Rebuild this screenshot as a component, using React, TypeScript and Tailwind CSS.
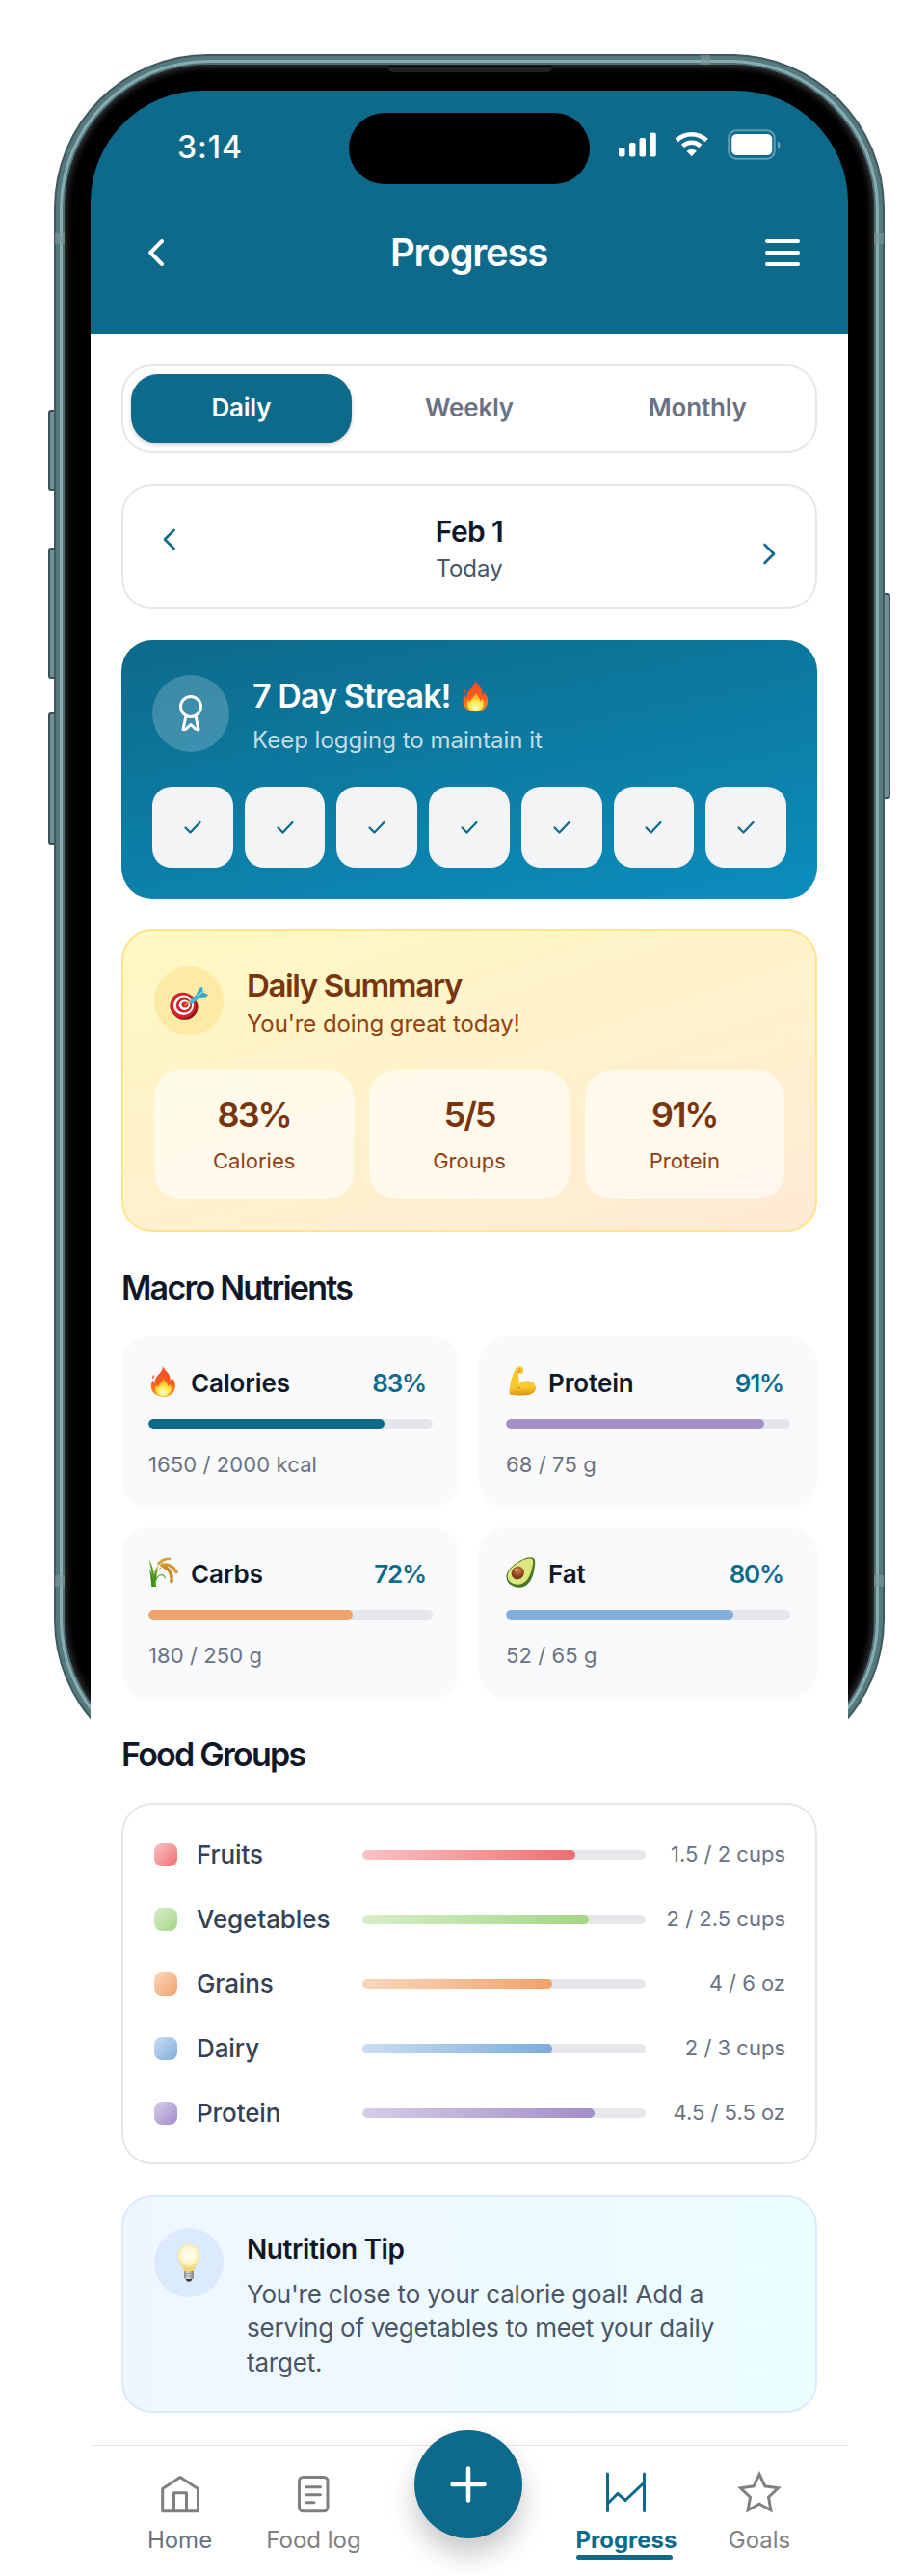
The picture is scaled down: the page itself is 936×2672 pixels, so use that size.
import type { ReactNode } from 'react'
import { clsx } from 'clsx'

interface Macro {
  name: string
  icon: ReactNode
  percent: number
  detail: string
  bar: string
}

interface FoodGroup {
  name: string
  amount: string
  percent: number
  gradient: string
}

function FireEmoji({ className }: { className?: string }) {
  return (
    <svg viewBox="0 0 28 34" className={className} fill="none">
      <defs>
        <linearGradient id="fireOuter" x1="14" y1="0" x2="14" y2="34" gradientUnits="userSpaceOnUse">
          <stop stopColor="#f0502a" />
          <stop offset=".55" stopColor="#fb5a1d" />
          <stop offset="1" stopColor="#fd9a20" />
        </linearGradient>
        <radialGradient id="fireInner" cx="14" cy="29" r="13" gradientUnits="userSpaceOnUse">
          <stop stopColor="#fffdc8" />
          <stop offset=".5" stopColor="#ffe84a" />
          <stop offset="1" stopColor="#fea61f" />
        </radialGradient>
      </defs>
      <path
        d="M13.5 0c1 4 6 6.500 7.500 11 .7 2 .5 3.500.3 5 1.200-.7 1.900-2 2.200-3.500 3 4 4.500 8 3.300 12.500C25.500 30.500 20.500 33.800 14 33.800 7 33.800 1.500 30 .7 24 .2 20.500 1 18 2.500 15.500c.3 1.500.8 2.500 1.700 3.500C4.500 14.500 6 12 9 9c2.500-2.500 4.300-5 4.500-9Z"
        fill="url(#fireOuter)"
      />
      <path d="M3.500 9.500c-1.500 1.500-2 3-1.200 4.500 1.500-1 2-2.500 1.200-4.500Z" fill="#f4512a" />
      <path
        d="M14.500 13c.2 3.500 4.500 5.500 4.800 9.500 1-.6 1.600-1.500 2-2.700 1.800 3 2.200 6 .7 8.700-1.600 3-4.500 4.600-8 4.600-4 0-7.500-1.800-8.500-5.100-.8-2.600-.3-4.800.8-7 .4 1.200 1 2 2 2.600.2-4 5.200-6.600 6.200-10.600Z"
        fill="url(#fireInner)"
      />
    </svg>
  )
}

function TargetEmoji({ className }: { className?: string }) {
  return (
    <svg viewBox="0 0 40 34" className={className} fill="none">
      <ellipse cx="15.500" cy="20.500" rx="14" ry="13.300" fill="#8e1218" />
      <ellipse cx="13.800" cy="19" rx="13.600" ry="13.200" fill="#d5202c" />
      <ellipse cx="14.500" cy="18.700" rx="10.600" ry="10.200" fill="#fff" />
      <ellipse cx="15" cy="18.500" rx="8.300" ry="8" fill="#cf1f2b" />
      <ellipse cx="15.500" cy="18.300" rx="5.900" ry="5.700" fill="#fff" />
      <ellipse cx="16" cy="18" rx="3.500" ry="3.400" fill="#cf1f2b" />
      <path d="m16 18 5-4.500" stroke="#c7a431" strokeWidth="1.600" strokeLinecap="round" />
      <path d="m20.500 14 9.500-8 3 2.500-8.500 7.500c-1.500 1-4.500 0-4-2Z" fill="#43b7d2" />
      <path d="m28 7 3-6 3-1 .7 5.500L40 8l-2 2.500-7 .5-3-4Z" fill="#3aa5c2" />
      <path d="m29 9 7.500-5.500" stroke="#8edbea" strokeWidth="1.300" />
    </svg>
  )
}

function ArmEmoji({ className }: { className?: string }) {
  return (
    <svg viewBox="0 0 30 32" className={className} fill="none">
      <defs>
        <linearGradient id="arm" x1="15" y1="0" x2="17" y2="32" gradientUnits="userSpaceOnUse">
          <stop stopColor="#fcc62f" />
          <stop offset=".7" stopColor="#fdc72e" />
          <stop offset="1" stopColor="#d98f13" />
        </linearGradient>
      </defs>
      <path
        d="M8 2.500C9 .5 12.500-.3 14.500 1c1.800 1.200 2.200 3.500 1.500 5.500-.4 1.200-1.700 1.600-3 1.300l-2-.3c-.3 3.500.2 7.500.9 12 1.500-2.300 4.300-3.700 8-3.700 5.600 0 9.600 3.300 9.600 7.500 0 5.700-5.600 8.200-14 8.200-5.500 0-10-.2-12.700-.8C1.300 30.300.8 29 1 27 1.700 19 4 9.500 8 2.500Z"
        fill="url(#arm)"
      />
      <path d="M8.500 21.500c.7 1.600 2.300 2.300 4.200 1.900M9.500 5.800l3.500.7M12.500 2.800l.3 2.200" stroke="#b97a15" strokeWidth=".8" strokeLinecap="round" />
    </svg>
  )
}

function RiceEmoji({ className }: { className?: string }) {
  return (
    <svg viewBox="0 0 31 32" className={className} fill="none" strokeLinecap="round">
      <path d="M4.500 31C4 22 3 12 .7 2.500 5 10 6.500 18 6.700 26" fill="#5aa32a" />
      <path d="M3.300 31C2.800 25 2 18 1 12.500c3 5 4.500 12 5 18.500Z" fill="#3f8a1f" />
      <path d="M5 31c0-9 1.500-17 4.500-21-1 6-1.500 14-1.500 21Z" fill="#478f22" />
      <path d="M7 29c.5-6 3-10.500 7-10.500 1.500 0 2.500 1.500 3.500 3.500" stroke="#75b63c" strokeWidth="1.300" />
      <path d="M6.500 17C8 10 12 5.500 18 3.500M7.500 17c3.500-6 8-8 13-7.500" stroke="#a9a23c" strokeWidth=".9" />
      <path d="M10.500 6.500C14 3 18 1.800 22 1.800" stroke="#d99f3a" strokeWidth="2.800" strokeDasharray="1.500 2.500" />
      <path d="M14 8.500c6-1.500 11 .5 15 7" stroke="#d79932" strokeWidth="3.600" strokeDasharray="1.800 2.200" />
      <path d="M17 10.500c5 2.500 7.500 7 7 15.500" stroke="#c98727" strokeWidth="3.600" strokeDasharray="1.800 2.200" />
    </svg>
  )
}

function AvocadoEmoji({ className }: { className?: string }) {
  return (
    <svg viewBox="0 0 31 32" className={className} fill="none">
      <defs>
        <radialGradient id="pit" cx="11" cy="14" r="8" gradientUnits="userSpaceOnUse">
          <stop stopColor="#d0824f" />
          <stop offset="1" stopColor="#7b3813" />
        </radialGradient>
      </defs>
      <path
        d="M21.500.8c2.500-.9 6-.7 7.700.7 2 2.500.7 9.500-.7 15.500C26.500 25 22 31.700 14 31.700 6 31.700.5 27 .5 20.500.5 12.500 12 4 21.500.8Z"
        fill="#4c7527"
      />
      <path
        d="M21 2c2.500-.9 5.300-.8 6.500.3 1.500 2 .3 7.700-1.300 12.700C24 22.500 19.500 28.700 12.700 28.700 6 28.700 1.700 25 1.700 19.700 1.700 12.500 12 5 21 2Z"
        fill="#dbe87c"
      />
      <ellipse cx="12.300" cy="16.500" rx="6.500" ry="7" fill="url(#pit)" transform="rotate(30 12.300 16.500)" />
      <circle cx="10.500" cy="13.500" r="1.300" fill="#f0c09c" />
    </svg>
  )
}

function BulbEmoji({ className }: { className?: string }) {
  return (
    <svg viewBox="0 0 24 39" className={className} fill="none">
      <defs>
        <radialGradient id="bulb" cx="12" cy="11" r="14" gradientUnits="userSpaceOnUse">
          <stop stopColor="#fffef4" />
          <stop offset=".6" stopColor="#fff6cf" />
          <stop offset="1" stopColor="#f2d468" />
        </radialGradient>
        <linearGradient id="cap" x1="7" y1="0" x2="17" y2="0" gradientUnits="userSpaceOnUse">
          <stop stopColor="#8c8c8c" />
          <stop offset=".4" stopColor="#e2e0da" />
          <stop offset="1" stopColor="#85827c" />
        </linearGradient>
      </defs>
      <path
        d="M12 .3C5.500.3.4 5.200.4 11.500c0 4 1.800 6.700 3.700 9.500 1.500 2.300 2.200 4.300 2.600 7h10.600c.4-2.700 1.100-4.700 2.600-7 1.900-2.800 3.700-5.500 3.700-9.500C23.600 5.200 18.500.3 12 .3Z"
        fill="url(#bulb)"
      />
      <path d="M7 28h10v6.500c0 1.200-1.500 2-2.500 2h-5C8.500 36.500 7 35.700 7 34.500V28Z" fill="url(#cap)" />
      <path d="M7.300 30.500h9.400M7.300 33h9.400" stroke="#8b8780" strokeWidth=".7" />
      <path d="M8.800 36h6.400c0 1.500-1.400 2.700-3.200 2.700S8.800 37.500 8.800 36Z" fill="#3b3a3a" />
    </svg>
  )
}

const MACROS: Macro[] = [
  { name: 'Calories', icon: <FireEmoji className="ml-0.5 h-8 w-[27px]" />, percent: 83, detail: '1650 / 2000 kcal', bar: 'bg-[#0d6a8a]' },
  { name: 'Protein', icon: <ArmEmoji className="ml-0.5 h-[31px] w-[30px]" />, percent: 91, detail: '68 / 75 g', bar: 'bg-[#a48fc9]' },
  { name: 'Carbs', icon: <RiceEmoji className="h-8 w-[31px]" />, percent: 72, detail: '180 / 250 g', bar: 'bg-[#f0a46c]' },
  { name: 'Fat', icon: <AvocadoEmoji className="h-8 w-[31px]" />, percent: 80, detail: '52 / 65 g', bar: 'bg-[#82aedb]' },
]

const FOOD_GROUPS: FoodGroup[] = [
  { name: 'Fruits', amount: '1.5 / 2 cups', percent: 75, gradient: 'from-[#f9c2c5] to-[#ee6d73]' },
  { name: 'Vegetables', amount: '2 / 2.5 cups', percent: 80, gradient: 'from-[#d8edcb] to-[#a5d584]' },
  { name: 'Grains', amount: '4 / 6 oz', percent: 67, gradient: 'from-[#f9d7be] to-[#f0a169]' },
  { name: 'Dairy', amount: '2 / 3 cups', percent: 67, gradient: 'from-[#c9def1] to-[#7eacda]' },
  { name: 'Protein', amount: '4.5 / 5.5 oz', percent: 82, gradient: 'from-[#d6cde9] to-[#a28ec8]' },
]

const SUMMARY = [
  { value: '83%', label: 'Calories' },
  { value: '5/5', label: 'Groups' },
  { value: '91%', label: 'Protein' },
]

function PhoneFrame() {
  return (
    <div className="pointer-events-none absolute inset-x-0 top-0 h-[1900px]" aria-hidden="true">
      <div className="absolute top-[425px] left-[50px] h-[84px] w-3 rounded-[3px] border-2 border-[#3a5155] bg-[#6f9094]" />
      <div className="absolute top-[568px] left-[50px] h-[136px] w-3 rounded-[3px] border-2 border-[#3a5155] bg-[#6f9094]" />
      <div className="absolute top-[739px] left-[50px] h-[137px] w-3 rounded-[3px] border-2 border-[#3a5155] bg-[#6f9094]" />
      <div className="absolute top-[615px] left-[912px] h-[214px] w-3 rounded-[3px] border-2 border-[#3a5155] bg-[#6f9094]" />
      <div className="absolute top-14 left-14 h-[1784px] w-[862px] rounded-[160px] bg-[#41595e] p-0.5">
        <div className="h-full rounded-[158px] bg-[#55797e] p-1">
          <div className="h-full rounded-[154px] bg-[#86adb0] p-[3px]">
            <div className="h-full rounded-[151px] bg-[#4d6f74] p-0.5">
              <div className="h-full rounded-[149px] bg-black shadow-[inset_0_0_7px_2px_#3a3a3a]" />
            </div>
          </div>
        </div>
      </div>
      <div className="absolute top-[57px] left-[727px] h-[10px] w-[10px] bg-[#7d9799]/60" />
      <div className="absolute top-[242px] left-[57px] h-[11px] w-[10px] bg-[#7d9799]/60" />
      <div className="absolute top-[242px] left-[907px] h-[11px] w-[10px] bg-[#7d9799]/60" />
      <div className="absolute top-[1634px] left-[57px] h-[12px] w-[10px] bg-[#7d9799]/60" />
      <div className="absolute top-[1634px] left-[907px] h-[12px] w-[10px] bg-[#7d9799]/60" />
      <div className="absolute top-[68px] left-[403px] h-[7px] w-[170px] rounded-b-[5px] border-t-2 border-black bg-[#222]" />
    </div>
  )
}

function StatusIcons() {
  return (
    <svg width="170" height="34" viewBox="0 0 170 34" fill="none">
      <rect x="2" y="20" width="6.500" height="9.500" rx="2" fill="#fff" />
      <rect x="13" y="15" width="6.500" height="14.500" rx="2" fill="#fff" />
      <rect x="23.500" y="10" width="6.500" height="19.500" rx="2" fill="#fff" />
      <rect x="34.300" y="4.500" width="6.500" height="25" rx="2" fill="#fff" />
      <path d="M77.700 29.200 72.500 23.800c2.800-2.700 7.600-2.700 10.400 0l-5.200 5.400Z" fill="#fff" />
      <path d="M68.500 18.500c5.200-5 13.200-5 18.400 0" stroke="#fff" strokeWidth="4.600" />
      <path d="M62.200 12.500c8.800-8.300 22.200-8.300 31 0" stroke="#fff" strokeWidth="4.600" />
      <rect x="116.200" y="2.200" width="47.500" height="29.500" rx="8" stroke="#fff" strokeOpacity=".35" strokeWidth="2" />
      <rect x="119.200" y="6" width="42" height="22" rx="5" fill="#fff" />
      <path d="M167 13.500v8c1.500-.6 2.600-2 2.600-4s-1.100-3.400-2.600-4Z" fill="#fff" fillOpacity=".4" />
    </svg>
  )
}

function Header() {
  return (
    <header className="h-[252px] rounded-t-[116px] bg-[#0d6a8a] pt-[23px] text-white">
      <div className="flex h-[74px]">
        <span className="w-[268px] pl-[90px] text-[32px] leading-[71px] font-medium tracking-[1px]">3:14</span>
        <span className="h-[74px] w-[250px] rounded-full bg-black" />
        <span className="pt-[16px] pl-7">
          <StatusIcons />
        </span>
      </div>
      <div className="mt-[41px] flex h-[60px] items-center justify-between pr-[50px] pl-[58px]">
        <svg width="20" height="32" viewBox="0 0 20 32" fill="none">
          <path d="M16 4 4.200 16 16 28" stroke="#fff" strokeWidth="4" strokeLinecap="round" strokeLinejoin="round" />
        </svg>
        <h1 className="ml-[7px] text-[40px] leading-[60px] font-semibold tracking-[-1.2px]">Progress</h1>
        <div className="flex w-9 flex-col gap-2">
          <span className="h-1 rounded-full bg-white" />
          <span className="h-1 rounded-full bg-white" />
          <span className="h-1 rounded-full bg-white" />
        </div>
      </div>
    </header>
  )
}

function PeriodTabs() {
  return (
    <div className="flex h-[92px] gap-2 rounded-[32px] border-2 border-gray-200 p-2 text-[26px] font-semibold tracking-[-0.2px]">
      <button className="flex-1 rounded-[28px] bg-[#0d6a8a] pb-[3px] text-white shadow-[0_2px_4px_rgba(0,0,0,0.2)]">Daily</button>
      <button className="flex-1 pb-[3px] text-gray-500">Weekly</button>
      <button className="flex-1 pb-[3px] text-gray-500">Monthly</button>
    </div>
  )
}

function DateCard() {
  return (
    <div className="mt-8 flex h-[130px] justify-between rounded-[32px] border-2 border-gray-200 px-[39px] text-[#0d6a8a]">
      <svg className="mt-[43px]" width="16" height="25" viewBox="0 0 16 25" fill="none">
        <path d="M13.500 3 4 12.500l9.500 9.500" stroke="currentColor" strokeWidth="2.600" strokeLinecap="round" strokeLinejoin="round" />
      </svg>
      <div className="pt-[26px] text-center">
        <p className="text-[30px] leading-[43px] font-semibold tracking-[-0.6px] text-gray-900">Feb 1</p>
        <p className="text-2xl leading-[34px] text-gray-600">Today</p>
      </div>
      <svg className="mt-[58px]" width="16" height="25" viewBox="0 0 16 25" fill="none">
        <path d="M2.500 3 12 12.500 2.500 22" stroke="currentColor" strokeWidth="2.600" strokeLinecap="round" strokeLinejoin="round" />
      </svg>
    </div>
  )
}

function StreakCard() {
  return (
    <section className="mt-8 rounded-[32px] bg-[linear-gradient(168deg,#0d6a8a,#0b8ebd)] p-8 text-white">
      <div className="flex h-[88px] items-center">
        <div className="flex h-20 w-20 items-center justify-center rounded-full bg-white/20">
          <svg width="26" height="40" viewBox="0 0 26 40" fill="none" stroke="#fff" strokeWidth="3" strokeLinejoin="round">
            <circle cx="13" cy="13" r="10.500" />
            <path d="M8 22.500 5 36.500q2 .5 3.500-.8l4.500-4.200 4.500 4.200q1.500 1.300 3.500.8l-3-14" />
          </svg>
        </div>
        <div className="ml-6 h-[88px]">
          <h2 className="flex items-center text-[34px] leading-[51px] font-semibold tracking-[-0.9px]">
            7 Day Streak!
            <FireEmoji className="ml-3 h-[34px] w-[27px]" />
          </h2>
          <p className="pt-1 text-2xl leading-[34px] text-white/75">Keep logging to maintain it</p>
        </div>
      </div>
      <div className="mt-8 flex gap-3">
        {Array.from({ length: 7 }, (_, day) => (
          <div key={day} className="flex h-[84px] flex-1 items-center justify-center rounded-[20px] bg-gray-100">
            <svg width="20" height="16" viewBox="0 0 20 16" fill="none">
              <path d="m2.500 8.500 5 5L17.500 3" stroke="#0d6a8a" strokeWidth="2.200" strokeLinecap="round" strokeLinejoin="round" />
            </svg>
          </div>
        ))}
      </div>
    </section>
  )
}

function SummaryCard() {
  return (
    <section className="mt-8 h-[314px] rounded-[32px] border-2 border-[#fde58a] bg-[linear-gradient(162deg,#fef9c3,#ffead5)] p-8 text-[#78350f]">
      <div className="flex h-20 items-center">
        <div className="flex h-[72px] w-[72px] items-center justify-center rounded-full bg-[#fdeaa4]">
          <TargetEmoji className="mt-1.5 h-[34px] w-10" />
        </div>
        <div className="ml-6 h-20">
          <h2 className="text-[33px] leading-[48px] font-semibold tracking-[-1.400px]">Daily Summary</h2>
          <p className="text-2xl leading-[31px] tracking-[-0.1px] text-[#92400e]">You're doing great today!</p>
        </div>
      </div>
      <div className="mt-8 flex gap-4 text-center">
        {SUMMARY.map(({ value, label }) => (
          <div key={label} className="h-[134px] flex-1 rounded-[28px] bg-white/60 pt-[23px]">
            <p className="text-[36px] leading-[46px] font-semibold tracking-[-2px]">{value}</p>
            <p className="mt-[11px] text-[22px] leading-7 text-[#92400e]">{label}</p>
          </div>
        ))}
      </div>
    </section>
  )
}

function SectionTitle({ children }: { children: ReactNode }) {
  return <h2 className="mt-8 mb-6 text-[34px] leading-[52px] font-semibold tracking-[-1.750px] text-gray-900">{children}</h2>
}

function MacroCard({ name, icon, percent, detail, bar }: Macro) {
  return (
    <div className="h-[178px] rounded-[28px] bg-[#f9fafc] p-7">
      <div className="flex h-[41px] items-center pr-[7px] text-[26px] font-semibold">
        <span className="-mt-1 w-11">{icon}</span>
        <span className="tracking-[-0.1px] text-gray-900">{name}</span>
        <span className="ml-auto tracking-[-1.200px] text-[#0d6a8a]">{percent}%</span>
      </div>
      <div className="mt-[17px] h-2.5 overflow-hidden rounded-full bg-gray-200">
        <div className={clsx('h-full rounded-full', bar)} style={{ width: `${percent}%` }} />
      </div>
      <p className="mt-[23px] text-[22px] leading-7 tracking-[0.1px] text-gray-500">{detail}</p>
    </div>
  )
}

function FoodGroupRow({ name, amount, percent, gradient }: FoodGroup) {
  return (
    <li className="flex h-[39px] items-center">
      <span className={clsx('h-6 w-6 rounded-lg bg-linear-to-br', gradient)} />
      <span className="ml-5 w-[172px] text-[26px] font-medium tracking-[-0.1px] text-gray-700">{name}</span>
      <div className="h-2.5 w-[294px] overflow-hidden rounded-full bg-gray-200">
        <div className={clsx('h-full rounded-full bg-linear-to-r', gradient)} style={{ width: `${percent}%` }} />
      </div>
      <span className="-mr-px ml-auto text-[22px] text-gray-500">{amount}</span>
    </li>
  )
}

function TipCard() {
  return (
    <section className="mt-8 flex h-[226px] rounded-[32px] border-2 border-blue-100 bg-[linear-gradient(90deg,#eff6ff,#ecfeff)] p-8">
      <div className="flex h-[72px] w-[72px] shrink-0 items-center justify-center rounded-full bg-blue-100">
        <BulbEmoji className="h-[39px] w-6" />
      </div>
      <div className="ml-6 w-[510px]">
        <h3 className="text-[28px] leading-[44px] font-semibold tracking-[-0.4px] text-gray-900">Nutrition Tip</h3>
        <p className="mt-[7px] text-[26px] leading-[35.400px] tracking-[-0.2px] text-gray-600">
          You're close to your calorie goal! Add a serving of vegetables to meet your daily target.
        </p>
      </div>
    </section>
  )
}

function NavItem({ label, className, children }: { label: string; className: string; children: ReactNode }) {
  return (
    <a className={clsx('flex flex-col items-center pt-6', className)}>
      <svg width="48" height="48" viewBox="0 0 48 48" fill="none" stroke="currentColor" strokeWidth="3" strokeLinejoin="round">
        {children}
      </svg>
      <span className="mt-[9px] text-2xl leading-[34px]">{label}</span>
    </a>
  )
}

function BottomNav() {
  return (
    <nav className="mt-[33px] flex h-[136px] border-t border-gray-200 pl-[23px]">
      <NavItem label="Home" className="w-[139px] text-gray-500">
        <g stroke="#808080">
          <path d="M5.700 20.500 24 8.500 42.500 20.500v23.300H5.700V20.500Z" />
          <path d="M17.500 43.500V24.700h13v18.800" />
        </g>
      </NavItem>
      <NavItem label="Food log" className="w-[139px] text-[#808080]">
        <rect x="8.500" y="8.500" width="29.500" height="35.300" rx="4" />
        <path d="M16 18.800h14.500M16 26.800h14.500M16 34.800h8" strokeLinecap="round" />
      </NavItem>
      <button className="-mt-4 ml-[35px] flex h-28 w-28 items-center justify-center rounded-full bg-[#0d6a8a] shadow-[0_16px_28px_rgba(0,0,0,0.22)]" aria-label="Add">
        <svg width="40" height="40" viewBox="0 0 40 40" fill="none">
          <path d="M20 3.500v33M3.500 20h33" stroke="#fff" strokeWidth="4.500" strokeLinecap="round" />
        </svg>
      </button>
      <div className="ml-[39px] w-[138px]">
        <NavItem label="Progress" className="font-bold text-[#0d6a8a]">
          <path d="M4.500 5v38.500M42.500 5v38.500M4.500 36 15 25.500l8 7L42.500 14" strokeLinecap="round" strokeLinejoin="miter" />
        </NavItem>
        <div className="-mt-0.5 ml-[17px] h-[5px] w-[100px] rounded-full bg-[#0d6a8a]" />
      </div>
      <NavItem label="Goals" className="w-[138px] text-[#808080]">
        <path d="m24 5.500 5.800 12.300 13.700 2-10 9.400 2.400 13.500L24 36.300l-11.900 6.400 2.400-13.500-10-9.400 13.700-2L24 5.500Z" strokeLinejoin="miter" />
      </NavItem>
    </nav>
  )
}

export default function App() {
  return (
    <div className="relative h-[2672px] w-[936px] overflow-hidden bg-white pt-[94px] font-['Inter',sans-serif]">
      <PhoneFrame />
      <main className="relative ml-[94px] w-[786px]">
        <Header />
        <div className="bg-white px-8 pt-8">
          <PeriodTabs />
          <DateCard />
          <StreakCard />
          <SummaryCard />
          <SectionTitle>Macro Nutrients</SectionTitle>
          <div className="grid grid-cols-2 gap-5">
            {MACROS.map((macro) => (
              <MacroCard key={macro.name} {...macro} />
            ))}
          </div>
          <SectionTitle>Food Groups</SectionTitle>
          <ul className="flex flex-col gap-7 rounded-[32px] border-2 border-gray-200 p-8">
            {FOOD_GROUPS.map((group) => (
              <FoodGroupRow key={group.name} {...group} />
            ))}
          </ul>
          <TipCard />
        </div>
        <BottomNav />
      </main>
    </div>
  )
}
